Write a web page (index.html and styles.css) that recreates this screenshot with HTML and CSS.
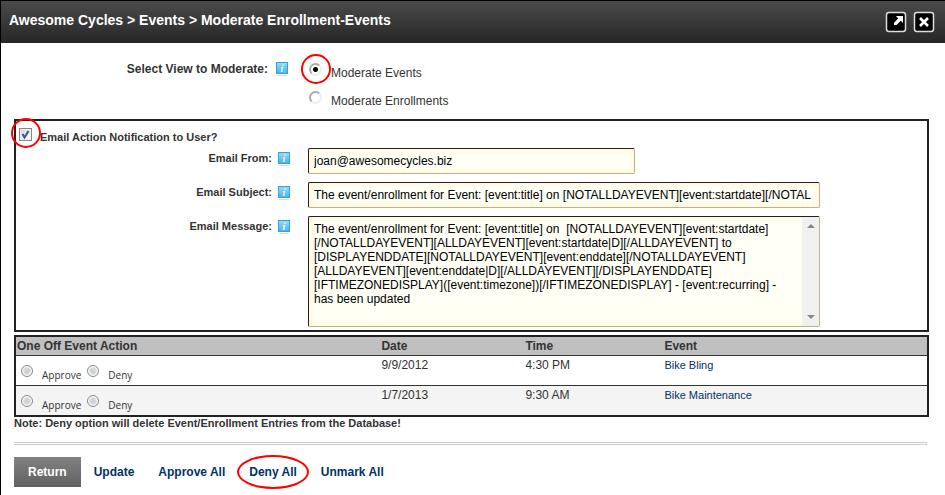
FILE: index.html
```
<!DOCTYPE html>
<html lang="en">
<head>
<meta charset="utf-8">
<title>Moderate Enrollment-Events</title>
<link rel="stylesheet" href="styles.css">
</head>
<body>
<svg class="defs" aria-hidden="true">
  <defs>
    <linearGradient id="info-fill" x1="0" y1="0" x2="0" y2="1">
      <stop offset="0" stop-color="#9adcf5"/>
      <stop offset="1" stop-color="#45b3e6"/>
    </linearGradient>
    <symbol id="info" viewBox="0 0 14 16">
      <path d="M2 14.500h10" stroke="#dcdcdc" stroke-width="1"/>
      <rect x="1.500" y="1.500" width="11" height="11" fill="url(#info-fill)" stroke="#35a3d8"/>
      <path d="M7.300 3.500h1.500v1.200H7zM6 6h2.300l-.9 4h.8v.8H5.700l1-4H6z" fill="#e9f8ff"/>
    </symbol>
  </defs>
</svg>
<header class="titlebar">
  <h1>Awesome Cycles &gt; Events &gt; Moderate Enrollment-Events</h1>
  <div class="window-tools">
    <button type="button" aria-label="Expand">
      <svg viewBox="0 0 22 22"><rect x="1.500" y="1.500" width="19" height="19" rx="2.500" fill="#000" stroke="#ddd" stroke-width="1.500"/><path d="M11 5h7v7l-2.200-2.200L11.500 14H9v-2.200l4.200-4.400z" fill="#fff"/></svg>
    </button>
    <button type="button" aria-label="Close">
      <svg viewBox="0 0 22 22"><rect x="1.500" y="1.500" width="19" height="19" rx="2.500" fill="#000" stroke="#ddd" stroke-width="1.500"/><path d="M7 7l8 8M15 7l-8 8" stroke="#fff" stroke-width="2.600"/></svg>
    </button>
  </div>
</header>
<main>
<form>
  <div class="view-select">
    <span class="label" id="view-label">Select View to Moderate:</span>
    <svg class="info"><use href="#info"/></svg>
    <div class="views" role="radiogroup" aria-labelledby="view-label">
      <label><span class="marked"><input class="sunken" type="radio" name="view" checked></span><span class="view-name">Moderate Events</span></label>
      <label><span><input class="sunken" type="radio" name="view"></span><span class="view-name">Moderate Enrollments</span></label>
    </div>
  </div>
  <section class="email">
    <label class="notify"><span class="tick marked"><input type="checkbox" checked><svg viewBox="0 0 13 13"><path d="M3.500 6l2 3.500L9.500 3" fill="none" stroke="#3c509b" stroke-width="2"/></svg></span>Email Action Notification to User?</label>
    <div class="fields">
      <label class="label" for="from">Email From:</label>
      <svg class="info"><use href="#info"/></svg>
      <input class="box short" id="from" type="text" value="joan@awesomecycles.biz">
      <label class="label" for="subject">Email Subject:</label>
      <svg class="info"><use href="#info"/></svg>
      <input class="box" id="subject" type="text" value="The event/enrollment for Event: [event:title] on [NOTALLDAYEVENT][event:startdate][/NOTAL">
      <label class="label" for="message">Email Message:</label>
      <svg class="info"><use href="#info"/></svg>
      <div class="box message">
        <textarea id="message">The event/enrollment for Event: [event:title] on  [NOTALLDAYEVENT][event:startdate]
[/NOTALLDAYEVENT][ALLDAYEVENT][event:startdate|D][/ALLDAYEVENT] to
[DISPLAYENDDATE][NOTALLDAYEVENT][event:enddate][/NOTALLDAYEVENT]
[ALLDAYEVENT][event:enddate|D][/ALLDAYEVENT][/DISPLAYENDDATE]
[IFTIMEZONEDISPLAY]([event:timezone])[/IFTIMEZONEDISPLAY] - [event:recurring] -
has been updated</textarea>
        <div class="scroll" aria-hidden="true"><svg viewBox="0 0 8 4"><path d="M0 4l4-4 4 4z" fill="#888"/></svg><svg viewBox="0 0 8 4"><path d="M0 0h8L4 4z" fill="#888"/></svg></div>
      </div>
    </div>
  </section>
  <table>
    <thead>
      <tr><th class="action">One Off Event Action</th><th class="date">Date</th><th class="time">Time</th><th>Event</th></tr>
    </thead>
    <tbody>
      <tr>
        <td><div class="choices"><label><input class="round" type="radio" name="bling">Approve</label><label><input class="round" type="radio" name="bling">Deny</label></div></td>
        <td>9/9/2012</td><td>4:30 PM</td><td><a href="#">Bike Bling</a></td>
      </tr>
      <tr>
        <td><div class="choices"><label><input class="round" type="radio" name="maintenance">Approve</label><label><input class="round" type="radio" name="maintenance">Deny</label></div></td>
        <td>1/7/2013</td><td>9:30 AM</td><td><a href="#">Bike Maintenance</a></td>
      </tr>
    </tbody>
  </table>
  <p class="note">Note: Deny option will delete Event/Enrollment Entries from the Database!</p>
  <div class="actions">
    <button type="button" class="return">Return</button>
    <a href="#">Update</a>
    <a href="#">Approve All</a>
    <a href="#" class="ringed">Deny All</a>
    <a href="#">Unmark All</a>
  </div>
</form>
</main>
</body>
</html>
```
FILE: styles.css
```
*, *::after { box-sizing: border-box; }
body {
  margin: 0;
  min-height: 100vh;
  border: solid #000;
  border-width: 1px 0 1px 1px;
  background: #fff;
  color: #333;
  font: 12px/14px "Liberation Sans", Arial, sans-serif;
}
.defs { position: absolute; width: 0; height: 0; }
a { color: #036; text-decoration: none; }
input { margin: 0; }

.titlebar {
  display: flex;
  justify-content: space-between;
  height: 42px;
  padding: 10px 10px 0 8px;
  background: linear-gradient(#4b4b4b, #262626);
}
h1 { margin: 0; color: #fff; font-size: 14px; line-height: 18px; }
.window-tools { display: flex; gap: 6px; }
.window-tools button {
  width: 22px;
  height: 22px;
  padding: 0;
  border: 0;
  background: none;
}
.window-tools svg { display: block; }

main { padding: 18px 16px 8px 13px; }
.label { font-weight: bold; text-align: right; line-height: 20px; }
.info { width: 14px; height: 16px; margin-top: 3px; }

.view-select {
  display: grid;
  grid-template-columns: 254px 14px 1fr;
  column-gap: 7px;
  padding-bottom: 2px;
}
.view-select .label { line-height: 16px; }
.view-select .info { margin-top: 0; }
.views { padding-left: 13px; }
.views label { display: flex; gap: 9px; height: 28px; }
.view-name { line-height: 24px; }
.marked { position: relative; }
.marked::after {
  content: "";
  position: absolute;
  left: -8px;
  top: -7px;
  width: 30px;
  height: 30px;
  border: 2px solid #f00;
  border-radius: 50%;
}
.sunken, .round { appearance: none; border-radius: 50%; }
.sunken {
  display: block;
  width: 13px;
  height: 13px;
  margin-top: 2px;
  border: 2px solid;
  border-color: #aaa #eee #eee #aaa;
}
.sunken:checked { background: radial-gradient(circle, #000 2px, #fff 3px); }

.email {
  border: 2px solid #222;
  padding: 7px 0 3px 3px;
  margin-bottom: 3px;
}
.notify {
  display: flex;
  gap: 8px;
  height: 20px;
  font-size: 11px;
  font-weight: bold;
  line-height: 18px;
}
.tick { width: 13px; height: 13px; }
.tick input {
  appearance: none;
  display: block;
  width: 13px;
  height: 13px;
  border: 1px solid #888;
  background: linear-gradient(135deg, #cfd3da, #fff);
  box-shadow: inset 0 0 0 1px #eee;
}
.tick svg { position: absolute; inset: 0; }
.tick::after { top: -10px; }
.fields {
  display: grid;
  grid-template-columns: 253px 14px minmax(0, 524px);
  column-gap: 5px;
  row-gap: 8px;
}
.fields .label { font-size: 11px; }
.fields .box { margin-left: 12px; }
.box {
  height: 26px;
  padding: 0 5px;
  border: 1px solid;
  border-color: #222 #bdb58a #bdb58a #222;
  border-radius: 2px;
  background: #fffff5;
  box-shadow: inset 0 0 6px 1px #fff4cf;
  color: #000;
  font: inherit;
}
.short { width: 327px; }
.fields .message { display: flex; height: 111px; padding: 0 0 0 5px; }
textarea {
  flex: 1;
  min-width: 0;
  padding: 5px 0 0;
  border: 0;
  background: none;
  resize: none;
  overflow: hidden;
  color: #000;
  font: inherit;
  white-space: pre;
}
.scroll {
  display: flex;
  flex-direction: column;
  justify-content: space-between;
  align-items: center;
  width: 17px;
  padding: 7px 0;
  background: #f0f0f0;
}
.scroll svg { width: 8px; height: 4px; }

table {
  width: 100%;
  table-layout: fixed;
  border: 2px solid #222;
  border-collapse: separate;
  border-spacing: 0;
}
th {
  padding: 0 1px;
  background: #c0c0c0;
  text-align: left;
  line-height: 18px;
}
td {
  height: 30px;
  padding: 2px 1px 0;
  border-top: 1px solid #333;
  vertical-align: top;
}
td a { font-size: 11px; }
tbody tr:nth-child(2) td { height: 29px; background: #f4f4f4; }
.action { width: 40%; }
.date { width: 144px; }
.time { width: 139px; }
.choices {
  display: flex;
  gap: 6px;
  padding: 7px 0 0 4px;
  font: 10px/20px "Open Sans", Tahoma, sans-serif;
}
.choices label { display: flex; gap: 9px; height: 20px; }
.round {
  width: 12px;
  height: 12px;
  border: 1px solid #888;
  background: radial-gradient(circle, #cfd3d8 2px, #e6e6e6 4px);
  box-shadow: inset 0 0 0 1px #fff;
}
.note {
  margin: 0;
  font-size: 11px;
  font-weight: bold;
  line-height: 13px;
}
.actions {
  display: flex;
  align-items: center;
  margin: 12px 2px 0 0;
  padding-top: 12px;
  border-top: 3px double #ccc;
  font-weight: bold;
}
.actions a { position: relative; margin-right: 24px; }
.return {
  height: 30px;
  margin-right: 13px;
  padding: 0 14px;
  border: 0;
  background: linear-gradient(#818181, #616161);
  color: #fff;
  font: inherit;
}
.actions .ringed::after {
  content: "";
  position: absolute;
  inset: -10px -12px;
  border: 2px solid #f00;
  border-radius: 50%;
}
```
